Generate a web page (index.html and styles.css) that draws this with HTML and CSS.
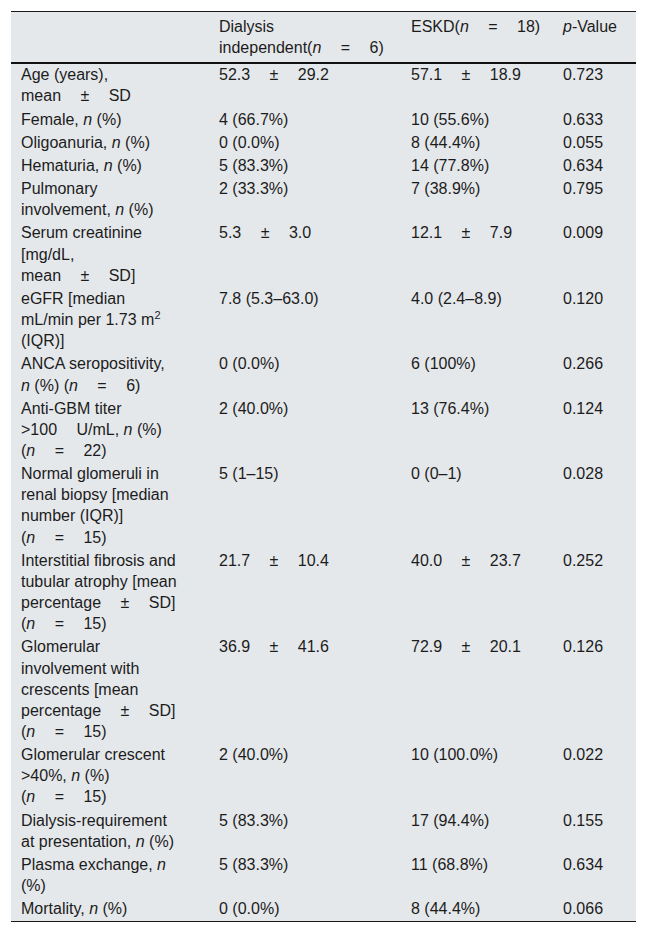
FILE: index.html
```html
<!DOCTYPE html>
<html lang="en">
<head>
<meta charset="utf-8">
<title>Table</title>
<link rel="stylesheet" href="styles.css">
</head>
<body>
<div class="wrap">
<table class="data">
<colgroup>
<col class="c1"><col class="c2"><col class="c3"><col class="c4">
</colgroup>
<thead>
<tr>
<th class="first"></th>
<th>Dialysis <span class="nb">independent(<i>n</i> = 6)</span></th>
<th class="esk"><span class="nb">ESKD(<i>n</i> = 18)</span></th>
<th><i>p</i>-Value</th>
</tr>
</thead>
<tbody>
<tr><td class="first">Age (years), <span class="nb">mean ± SD</span></td><td><span class="nb">52.3 ± 29.2</span></td><td><span class="nb">57.1 ± 18.9</span></td><td>0.723</td></tr>
<tr><td class="first">Female, <i>n</i> (%)</td><td>4 (66.7%)</td><td>10 (55.6%)</td><td>0.633</td></tr>
<tr><td class="first">Oligoanuria, <i>n</i> (%)</td><td>0 (0.0%)</td><td>8 (44.4%)</td><td>0.055</td></tr>
<tr><td class="first">Hematuria, <i>n</i> (%)</td><td>5 (83.3%)</td><td>14 (77.8%)</td><td>0.634</td></tr>
<tr><td class="first">Pulmonary involvement, <i>n</i> (%)</td><td>2 (33.3%)</td><td>7 (38.9%)</td><td>0.795</td></tr>
<tr><td class="first">Serum creatinine [mg/dL, <span class="nb">mean ± SD]</span></td><td><span class="nb">5.3 ± 3.0</span></td><td><span class="nb">12.1 ± 7.9</span></td><td>0.009</td></tr>
<tr><td class="first">eGFR [median mL/min per 1.73 m<sup>2</sup> (IQR)]</td><td>7.8 (5.3–63.0)</td><td>4.0 (2.4–8.9)</td><td>0.120</td></tr>
<tr><td class="first">ANCA seropositivity, <span class="keep"><i>n</i> (%)</span> <span class="nb">(<i>n</i> = 6)</span></td><td>0 (0.0%)</td><td>6 (100%)</td><td>0.266</td></tr>
<tr><td class="first">Anti-GBM titer <span class="nb">&gt;100 U/mL,</span> <i>n</i> (%) <span class="nb">(<i>n</i> = 22)</span></td><td>2 (40.0%)</td><td>13 (76.4%)</td><td>0.124</td></tr>
<tr><td class="first">Normal glomeruli in renal biopsy [median number (IQR)] <span class="nb">(<i>n</i> = 15)</span></td><td>5 (1–15)</td><td>0 (0–1)</td><td>0.028</td></tr>
<tr><td class="first">Interstitial fibrosis and tubular atrophy [mean <span class="nb">percentage ± SD]</span> <span class="nb">(<i>n</i> = 15)</span></td><td><span class="nb">21.7 ± 10.4</span></td><td><span class="nb">40.0 ± 23.7</span></td><td>0.252</td></tr>
<tr><td class="first">Glomerular involvement with crescents [mean <span class="nb">percentage ± SD]</span> <span class="nb">(<i>n</i> = 15)</span></td><td><span class="nb">36.9 ± 41.6</span></td><td><span class="nb">72.9 ± 20.1</span></td><td>0.126</td></tr>
<tr><td class="first">Glomerular crescent <span class="nb">&gt;40%,</span> <i>n</i> (%) <span class="nb">(<i>n</i> = 15)</span></td><td>2 (40.0%)</td><td>10 (100.0%)</td><td>0.022</td></tr>
<tr><td class="first">Dialysis-requirement at presentation, <i>n</i> (%)</td><td>5 (83.3%)</td><td>17 (94.4%)</td><td>0.155</td></tr>
<tr><td class="first">Plasma exchange, <i>n</i> (%)</td><td>5 (83.3%)</td><td>11 (68.8%)</td><td>0.634</td></tr>
<tr><td class="first">Mortality, <i>n</i> (%)</td><td>0 (0.0%)</td><td>8 (44.4%)</td><td>0.066</td></tr>
</tbody>
</table>
</div>
</body>
</html>
```

FILE: styles.css
```css
html, body {
  margin: 0;
  padding: 0;
  background: #ffffff;
}

body {
  font-family: "Liberation Sans", Arial, Helvetica, sans-serif;
  font-size: 16px;
  color: #1c1c1c;
}

.wrap {
  padding: 11px 11px 0 11px;
}

.data {
  width: 625px;
  table-layout: fixed;
  border-collapse: collapse;
  background: #e5e8eb;
  border-top: 1px solid #1a1a1a;
  border-bottom: 1px solid #1a1a1a;
}

.c1 { width: 198px; }
.c2 { width: 192px; }
.c3 { width: 152px; }
.c4 { width: 83px; }

.data th,
.data td {
  text-align: left;
  vertical-align: top;
  font-weight: normal;
  line-height: 21.15px;
  padding: 0 6px 2px 10px;
}

.data th {
  padding-top: 4px;
  padding-bottom: 4px;
  border-bottom: 2px solid #111111;
}

.data .first {
  padding-right: 30px;
}

.data th.esk {
  padding-right: 2px;
}

.nb {
  white-space: nowrap;
  word-spacing: 15px;
}

.keep {
  white-space: nowrap;
}

sup {
  font-size: 11px;
  line-height: 0;
  vertical-align: 6px;
}

i {
  font-style: italic;
}
```
